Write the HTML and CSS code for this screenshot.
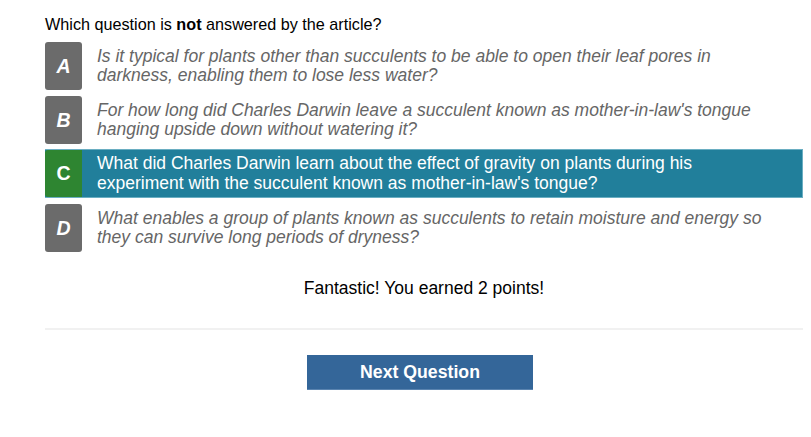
FILE: index.html
```html
<!DOCTYPE html>
<html>
<head>
<meta charset="utf-8">
<link rel="stylesheet" href="styles.css">
</head>
<body>
<div class="quiz">
  <div class="prompt">Which question is <b>not</b> answered by the article?</div>
  <div class="options">
    <div class="option">
      <div class="letter">A</div>
      <div class="text">Is it typical for plants other than succulents to be able to open their leaf pores in darkness, enabling them to lose less water?</div>
    </div>
    <div class="option">
      <div class="letter">B</div>
      <div class="text">For how long did Charles Darwin leave a succulent known as mother-in-law's tongue hanging upside down without watering it?</div>
    </div>
    <div class="option selected">
      <div class="letter">C</div>
      <div class="text">What did Charles Darwin learn about the effect of gravity on plants during his experiment with the succulent known as mother-in-law's tongue?</div>
    </div>
    <div class="option">
      <div class="letter">D</div>
      <div class="text">What enables a group of plants known as succulents to retain moisture and energy so they can survive long periods of dryness?</div>
    </div>
  </div>
  <div class="result">Fantastic! You earned 2 points!</div>
  <hr class="divider">
  <div class="actions">
    <button class="next">Next Question</button>
  </div>
</div>
</body>
</html>
```

FILE: styles.css
```css
html, body {
  margin: 0;
  padding: 0;
  background: #fff;
}
body {
  font-family: "Liberation Sans", Arial, sans-serif;
  font-size: 16px;
  color: #000;
}
.quiz {
  width: 758px;
  margin-left: 45px;
  padding-top: 14px;
}
.prompt {
  line-height: 20px;
  margin-bottom: 8px;
  font-size: 16.2px;
}
.options {
  display: flex;
  flex-direction: column;
  gap: 6px;
}
.option {
  display: flex;
  align-items: center;
  height: 48px;
  box-sizing: border-box;
}
.letter {
  width: 37px;
  height: 48px;
  flex: none;
  background: #6b6b6b;
  border-radius: 3px;
  color: #fff;
  font-weight: bold;
  font-style: italic;
  font-size: 19.5px;
  display: flex;
  align-items: center;
  justify-content: center;
}
.text {
  margin-left: 15px;
  width: 672px;
  font-style: italic;
  color: #666;
  font-size: 17.5px;
  line-height: 19.5px;
}
.option.selected {
  background: #217f9b;
  border: 1px solid #6aaec2;
  border-left: none;
  height: 49px;
  margin-top: -1px;
}
.option.selected .letter {
  background: #2e8531;
  font-style: normal;
  height: 47px;
  border-radius: 3px 0 0 3px;
}
.option.selected .text {
  color: #fff;
  font-style: normal;
}
.result {
  text-align: center;
  font-size: 17.5px;
  line-height: 20px;
  margin-top: 26px;
}
.divider {
  border: none;
  height: 2px;
  background: #f1f1f1;
  margin: 30px 0 0 0;
}
.actions {
  display: flex;
  justify-content: center;
  padding-right: 8px;
  margin-top: 25px;
}
.next {
  width: 226px;
  height: 35px;
  background: #346699;
  border: none;
  border-bottom: 1px solid #5a84b0;
  color: #fff;
  font-family: "Liberation Sans", Arial, sans-serif;
  font-weight: bold;
  font-size: 17.7px;
  padding: 0;
}
```
